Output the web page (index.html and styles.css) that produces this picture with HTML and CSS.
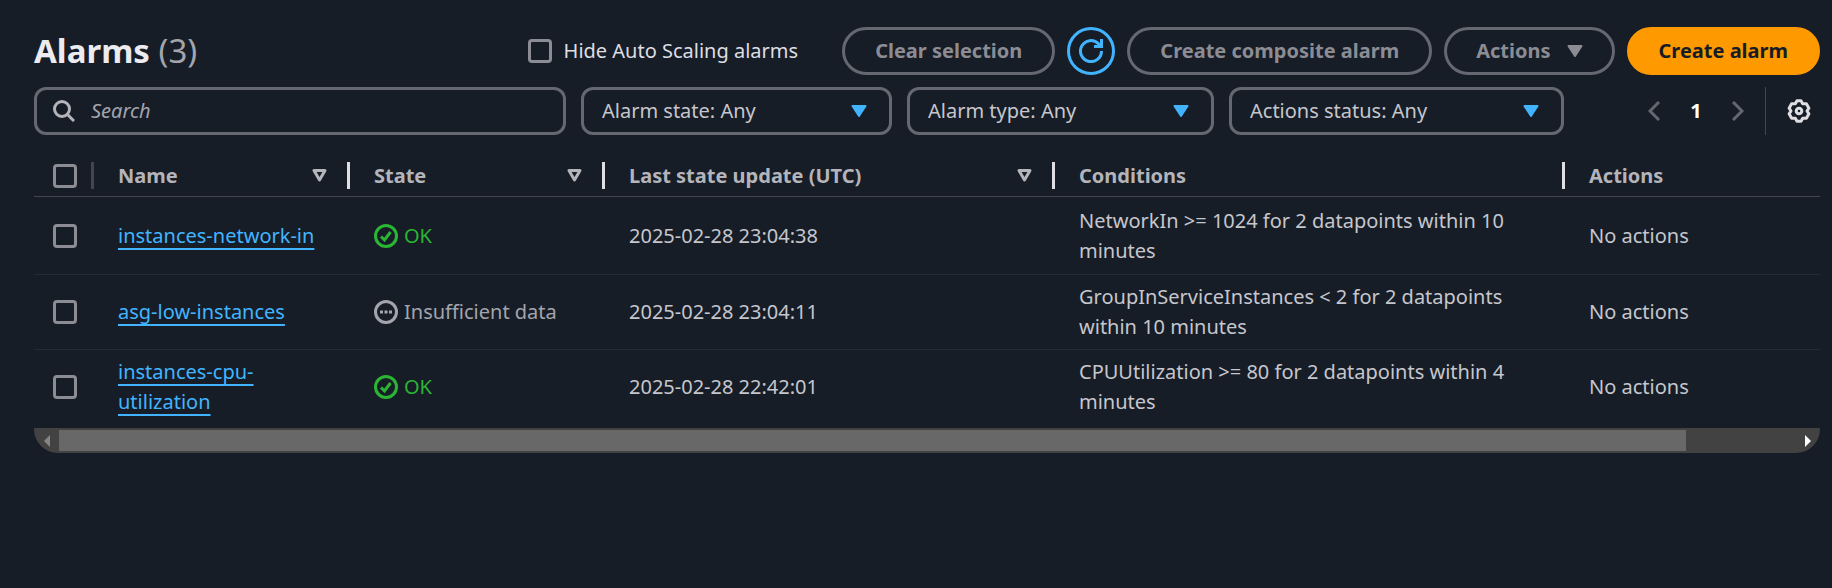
FILE: index.html
```html
<!DOCTYPE html>
<html lang="en">
<head>
<meta charset="utf-8">
<title>Alarms</title>
<link rel="stylesheet" href="styles.css">
</head>
<body>
<main class="panel">
  <header class="header">
    <h1 class="title">Alarms <span class="count">(3)</span></h1>
    <label class="hide-scaling"><input type="checkbox" class="check">Hide Auto Scaling alarms</label>
    <div class="buttons">
      <button class="btn" type="button">Clear selection</button>
      <button class="btn btn-round" type="button" aria-label="Refresh">
        <svg width="24" height="24" viewBox="0 0 24 24" fill="none" stroke="currentColor" stroke-width="3"><path d="M22.500 12A10.500 10.500 0 1 1 19.400 4.600L22 7M22.500 0v7.500H15"/></svg>
      </button>
      <button class="btn" type="button">Create composite alarm</button>
      <button class="btn btn-menu" type="button">Actions
        <svg width="16" height="12" viewBox="0 0 16 12" fill="currentColor" stroke="currentColor" stroke-width="2" stroke-linejoin="round"><path d="M1.500 1h13L8 11z"/></svg>
      </button>
      <button class="btn btn-primary" type="button">Create alarm</button>
    </div>
  </header>

  <div class="filters">
    <label class="search">
      <svg width="22" height="22" viewBox="0 0 22 22" fill="none" stroke="currentColor" stroke-width="3"><circle cx="9" cy="9" r="7.500"/><path d="M14 14l7 7"/></svg>
      <input type="search" placeholder="Search" aria-label="Search">
    </label>
    <select class="select select-state" aria-label="Alarm state"><option>Alarm state: Any</option></select>
    <select class="select select-type" aria-label="Alarm type"><option>Alarm type: Any</option></select>
    <select class="select select-status" aria-label="Actions status"><option>Actions status: Any</option></select>
    <div class="tools">
      <nav class="pages" aria-label="Pages">
        <button class="page-btn" type="button" aria-label="Previous page"><svg width="12" height="20" viewBox="0 0 12 20" fill="none" stroke="currentColor" stroke-width="3"><path d="M11 1L2 10l9 9"/></svg></button>
        <button class="page-btn page-current" type="button">1</button>
        <button class="page-btn" type="button" aria-label="Next page"><svg width="12" height="20" viewBox="0 0 12 20" fill="none" stroke="currentColor" stroke-width="3"><path d="M1 1l9 9-9 9"/></svg></button>
      </nav>
      <div class="settings">
        <button class="page-btn page-gear" type="button" aria-label="Preferences">
          <svg width="24" height="24" viewBox="0 0 24 24" fill="none" stroke="currentColor" stroke-width="3" stroke-linejoin="round"><path d="M10 1.700h4L15.700 4.800 19.400 4.800 21.900 9.200 20 12 21.900 14.800 19.400 19.200 15.700 19.200 14 22.300H10L8.300 19.200 4.600 19.200 2.100 14.800 4 12 2.100 9.200 4.600 4.800 8.300 4.800z"/><circle cx="12" cy="12" r="2.800"/></svg>
        </button>
      </div>
    </div>
  </div>

  <table class="table">
    <colgroup><col class="c-check"><col class="c-name"><col class="c-state"><col class="c-update"><col class="c-cond"><col></colgroup>
    <thead>
      <tr>
        <th class="cell-check"><div class="head head-dim"><input type="checkbox" class="check" aria-label="Select all"></div></th>
        <th><div class="head">Name<svg class="sort" width="15" height="13" viewBox="0 0 15 13"><path d="M2 1.500h11L7.500 11z"/></svg></div></th>
        <th><div class="head">State<svg class="sort" width="15" height="13" viewBox="0 0 15 13"><path d="M2 1.500h11L7.500 11z"/></svg></div></th>
        <th><div class="head">Last state update (UTC)<svg class="sort" width="15" height="13" viewBox="0 0 15 13"><path d="M2 1.500h11L7.500 11z"/></svg></div></th>
        <th><div class="head">Conditions</div></th>
        <th><div class="head head-last">Actions</div></th>
      </tr>
    </thead>
    <tbody>
      <tr>
        <td class="cell-check"><input type="checkbox" class="check" aria-label="Select instances-network-in"></td>
        <td><a href="#" class="link">instances-network-in</a></td>
        <td><span class="status ok"><svg width="24" height="24" viewBox="0 0 24 24"><circle cx="12" cy="12" r="10.500"/><path d="M7 12.500l3.500 3.500L16.500 8"/></svg>OK</span></td>
        <td>2025-02-28 23:04:38</td>
        <td>NetworkIn &gt;= 1024 for 2 datapoints within 10 minutes</td>
        <td>No actions</td>
      </tr>
      <tr>
        <td class="cell-check"><input type="checkbox" class="check" aria-label="Select asg-low-instances"></td>
        <td><a href="#" class="link">asg-low-instances</a></td>
        <td><span class="status pending"><svg width="24" height="24" viewBox="0 0 24 24"><circle cx="12" cy="12" r="10.500"/><path d="M6 12h3m1.500 0h3m1.500 0h3"/></svg>Insufficient data</span></td>
        <td>2025-02-28 23:04:11</td>
        <td>GroupInServiceInstances &lt; 2 for 2 datapoints within 10 minutes</td>
        <td>No actions</td>
      </tr>
      <tr>
        <td class="cell-check"><input type="checkbox" class="check" aria-label="Select instances-cpu-utilization"></td>
        <td><a href="#" class="link">instances-cpu-utilization</a></td>
        <td><span class="status ok"><svg width="24" height="24" viewBox="0 0 24 24"><circle cx="12" cy="12" r="10.500"/><path d="M7 12.500l3.500 3.500L16.500 8"/></svg>OK</span></td>
        <td>2025-02-28 22:42:01</td>
        <td>CPUUtilization &gt;= 80 for 2 datapoints within 4 minutes</td>
        <td>No actions</td>
      </tr>
    </tbody>
  </table>
  <div class="scrollbar">
    <button class="scroll-btn" type="button" aria-label="Scroll left"><svg width="6" height="12" viewBox="0 0 6 12" fill="currentColor"><path d="M6 0v12L0 6z"/></svg></button>
    <div class="track"><div class="thumb"></div></div>
    <button class="scroll-btn scroll-on" type="button" aria-label="Scroll right"><svg width="6" height="12" viewBox="0 0 6 12" fill="currentColor"><path d="M0 0v12l6-6z"/></svg></button>
  </div>
</main>
</body>
</html>
```
FILE: styles.css
```css
* { box-sizing: border-box; }
body {
  margin: 0;
  background: #161d26;
  color: #c6c6cd;
  font: 20px/30px "Noto Sans", sans-serif;
}
button, input, select { font: inherit; color: inherit; margin: 0; }
svg { flex: none; display: block; }
.panel { padding: 27px 12px 24px 34px; }

.header { display: flex; align-items: center; }
.title { margin: 0; flex: 1; font-size: 33px; line-height: 48px; font-weight: 700; color: #ebebf0; }
.count { font-weight: 400; color: #a4a4ad; }
.hide-scaling { display: flex; align-items: center; gap: 12px; margin-right: 44px; color: #dedee3; }
.check {
  appearance: none;
  display: block;
  flex: none;
  width: 24px;
  height: 24px;
  border: 3px solid #8c8c94;
  border-radius: 4px;
}
.buttons { display: flex; gap: 12px; }
.btn {
  height: 48px;
  padding: 0 30px;
  border: 3px solid #656871;
  border-radius: 24px;
  background: none;
  color: #8c8c94;
  font-weight: 700;
  white-space: nowrap;
}
.btn-round {
  display: grid;
  place-items: center;
  width: 48px;
  padding: 0;
  border-color: #42b4ff;
  color: #42b4ff;
}
.btn-menu { display: flex; align-items: center; gap: 16px; padding: 0 29px; }
.btn-primary { padding: 0 29px; border-color: #ff9900; background: #ff9900; color: #161d26; }

.filters { display: flex; align-items: center; gap: 15px; margin-top: 12px; }
.search {
  display: flex;
  align-items: center;
  gap: 16px;
  flex: 0 1 532px;
  height: 48px;
  padding: 0 16px;
  border: 3px solid #656871;
  border-radius: 12px;
  color: #b4b4bb;
}
.search input { flex: 1; min-width: 0; padding: 0; border: 0; background: none; outline: 0; }
.search input::placeholder { color: #a4a4ad; font-style: italic; opacity: 1; }
.select {
  appearance: none;
  height: 48px;
  padding: 0 50px 0 18px;
  border: 3px solid #656871;
  border-radius: 12px;
  background: url("data:image/svg+xml,%3Csvg xmlns='http://www.w3.org/2000/svg' width='16' height='12'%3E%3Cpath d='M1.500 1h13L8 11z' fill='%2342b4ff' stroke='%2342b4ff' stroke-width='2' stroke-linejoin='round'/%3E%3C/svg%3E") no-repeat right 22px center;
}
.select-state { flex: 0 1 311px; }
.select-type { flex: 0 1 307px; }
.select-status { flex: 0 1 335px; }
.tools { display: flex; align-items: center; gap: 12px; margin-left: auto; }
.pages { display: flex; gap: 12px; }
.page-btn { display: grid; place-items: center; width: 30px; height: 30px; padding: 0; border: 0; background: none; color: #656871; }
.page-current { color: #fff; font-weight: 700; }
.page-gear { color: #dedee3; }
.settings { display: flex; align-items: center; height: 48px; padding: 0 6px 0 18px; border-left: 1px solid #424650; }

.table { width: 100%; margin-top: 12px; border-collapse: separate; border-spacing: 0; table-layout: fixed; }
.c-check { width: 60px; }
.c-name { width: 256px; }
.c-state { width: 255px; }
.c-update { width: 450px; }
.c-cond { width: 510px; }
th { height: 50px; padding: 8px 0 0; border-bottom: 1px solid #424650; color: #b4b4bb; text-align: left; }
.head { display: flex; align-items: center; justify-content: space-between; height: 27px; padding: 0 20px 0 24px; border-right: 3px solid #dedee3; }
.head-dim { padding: 0 0 0 19px; border-color: #424650; }
.head-last { border: 0; }
.sort { fill: none; stroke: currentColor; stroke-width: 3; stroke-linejoin: round; }
td { height: 75px; padding: 7px 24px; border-bottom: 1px solid #232b37; vertical-align: middle; }
td.cell-check { padding-left: 19px; padding-right: 0; }
tbody tr:first-child td { height: 78px; }
tbody tr:last-child td { height: 78px; padding-bottom: 11px; border-bottom: 0; }
.link { color: #42b4ff; text-decoration: underline; text-decoration-thickness: 2px; text-underline-offset: 5px; text-decoration-skip-ink: none; }
.status { display: flex; align-items: center; gap: 6px; white-space: nowrap; }
.status svg { fill: none; stroke: currentColor; stroke-width: 3; }
.ok { color: #2bb534; }
.pending { color: #a4a4ad; }

.scrollbar { display: flex; height: 25px; border-radius: 0 0 24px 24px; overflow: hidden; background: #424242; }
.scroll-btn { display: grid; place-items: center; width: 25px; padding: 0; border: 0; background: none; color: #868686; }
.scroll-on { color: #fff; }
.track { flex: 1; padding: 2px 0; }
.thumb { width: 93.700%; height: 21px; background: #686868; }
```
